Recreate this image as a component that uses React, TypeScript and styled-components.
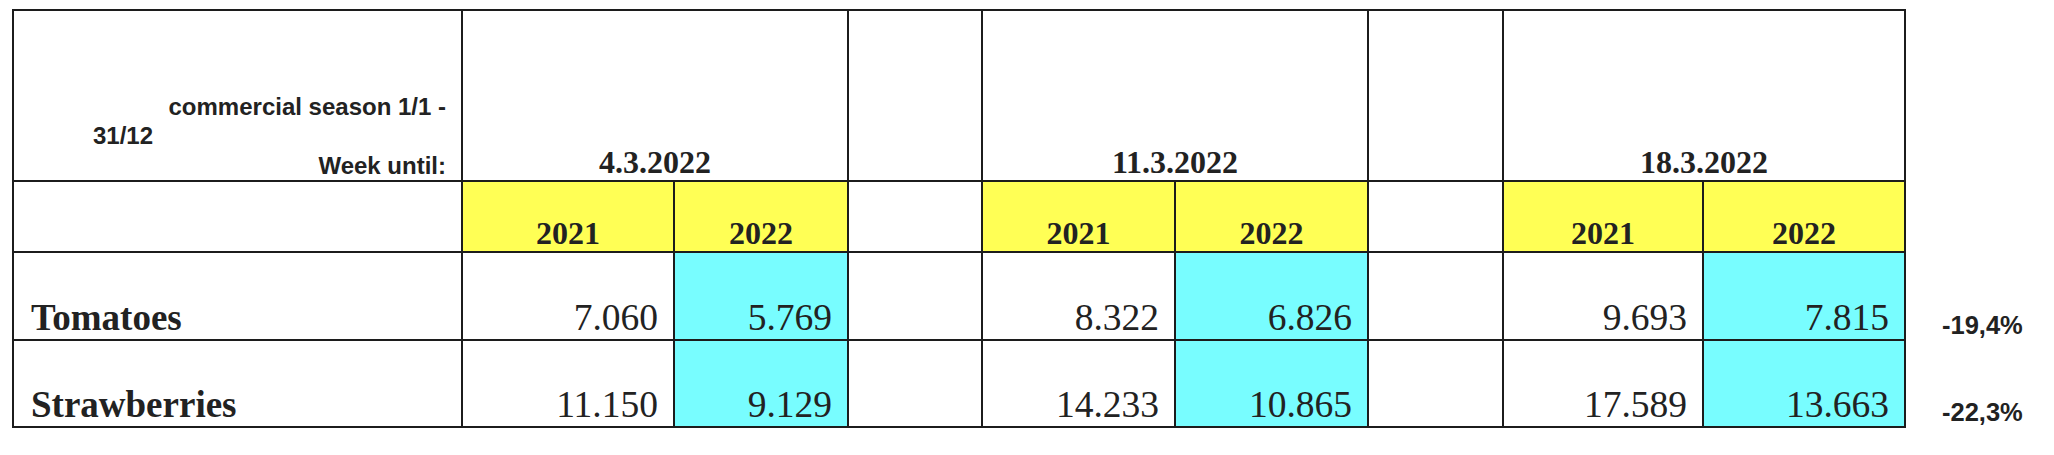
import React from 'react';
import styled, { createGlobalStyle } from 'styled-components';

const GlobalStyle = createGlobalStyle`
  html, body {
    margin: 0;
    padding: 0;
    background: #ffffff;
  }
`;

const SERIF = `"Liberation Serif", "Times New Roman", serif`;
const SANS = `"Liberation Sans", Arial, sans-serif`;
const LINE = '#1c1c1c';
const INK = '#222222';

interface Week {
  date: string;
  values: { [product: string]: [string, string] };
}

const weeks: Week[] = [
  { date: '4.3.2022', values: { Tomatoes: ['7.060', '5.769'], Strawberries: ['11.150', '9.129'] } },
  { date: '11.3.2022', values: { Tomatoes: ['8.322', '6.826'], Strawberries: ['14.233', '10.865'] } },
  { date: '18.3.2022', values: { Tomatoes: ['9.693', '7.815'], Strawberries: ['17.589', '13.663'] } },
];

const products = [
  { name: 'Tomatoes', change: '-19,4%' },
  { name: 'Strawberries', change: '-22,3%' },
];

const Page = styled.div`
  display: flex;
  align-items: flex-start;
  padding: 9px 0 0 12px;
`;

const Sheet = styled.div`
  display: grid;
  grid-template-columns: 449px 212px 174px 134px 193px 193px 135px 200px 202px;
  grid-template-rows: 171px 71px 88px 87px;
  border-top: 2px solid ${LINE};
  border-left: 2px solid ${LINE};
  color: ${INK};
`;

const Cell = styled.div<{ $span?: number; $fill?: string }>`
  grid-column: span ${p => p.$span || 1};
  border-right: 2px solid ${LINE};
  border-bottom: 2px solid ${LINE};
  background: ${p => p.$fill || '#ffffff'};
  display: flex;
  align-items: flex-end;
  min-width: 0;
`;

const LabelCell = styled(Cell)`
  flex-direction: column;
  align-items: stretch;
  justify-content: flex-end;
  font-family: ${SANS};
  font-weight: bold;
  font-size: 24px;
  line-height: 29.5px;
  padding: 0 15px 0 0;
`;

const LabelLine = styled.div<{ $indent?: number }>`
  text-align: ${p => (p.$indent !== undefined ? 'left' : 'right')};
  padding-left: ${p => p.$indent || 0}px;
  white-space: nowrap;
`;

const HeadCell = styled(Cell)`
  justify-content: center;
  font-family: ${SERIF};
  font-weight: bold;
  font-size: 32px;
  line-height: 1;
  padding-bottom: 2px;
`;

const NameCell = styled(Cell)`
  font-family: ${SERIF};
  font-weight: bold;
  font-size: 37px;
  line-height: 1;
  padding: 0 0 3px 17px;
`;

const ValueCell = styled(Cell)`
  justify-content: flex-end;
  font-family: ${SERIF};
  font-size: 37.5px;
  line-height: 1;
  padding: 0 15px 3px 0;
`;

const Notes = styled.div`
  display: grid;
  grid-template-rows: 244px 88px 87px;
  margin-left: 36px;
  color: ${INK};
  font-family: ${SANS};
  font-weight: bold;
  font-size: 25.5px;
  line-height: 1;
`;

const Note = styled.div<{ $pad: number }>`
  display: flex;
  align-items: flex-end;
  padding-bottom: ${p => p.$pad}px;
`;

const YELLOW = '#ffff55';
const CYAN = '#78fdff';

export default function App() {
  return (
    <>
      <GlobalStyle />
      <Page>
        <Sheet>
          <LabelCell>
            <LabelLine>commercial season 1/1 -</LabelLine>
            <LabelLine $indent={79}>31/12</LabelLine>
            <LabelLine>Week until:</LabelLine>
          </LabelCell>
          {weeks.map((w, i) => (
            <React.Fragment key={w.date}>
              {i > 0 && <Cell />}
              <HeadCell $span={2}>{w.date}</HeadCell>
            </React.Fragment>
          ))}

          <Cell />
          {weeks.map((w, i) => (
            <React.Fragment key={w.date}>
              {i > 0 && <Cell />}
              <HeadCell $fill={YELLOW}>2021</HeadCell>
              <HeadCell $fill={YELLOW}>2022</HeadCell>
            </React.Fragment>
          ))}

          {products.map(p => (
            <React.Fragment key={p.name}>
              <NameCell>{p.name}</NameCell>
              {weeks.map((w, i) => (
                <React.Fragment key={w.date}>
                  {i > 0 && <Cell />}
                  <ValueCell>{w.values[p.name][0]}</ValueCell>
                  <ValueCell $fill={CYAN}>{w.values[p.name][1]}</ValueCell>
                </React.Fragment>
              ))}
            </React.Fragment>
          ))}
        </Sheet>
        <Notes>
          <div />
          <Note $pad={3}>{products[0].change}</Note>
          <Note $pad={3}>{products[1].change}</Note>
        </Notes>
      </Page>
    </>
  );
}
